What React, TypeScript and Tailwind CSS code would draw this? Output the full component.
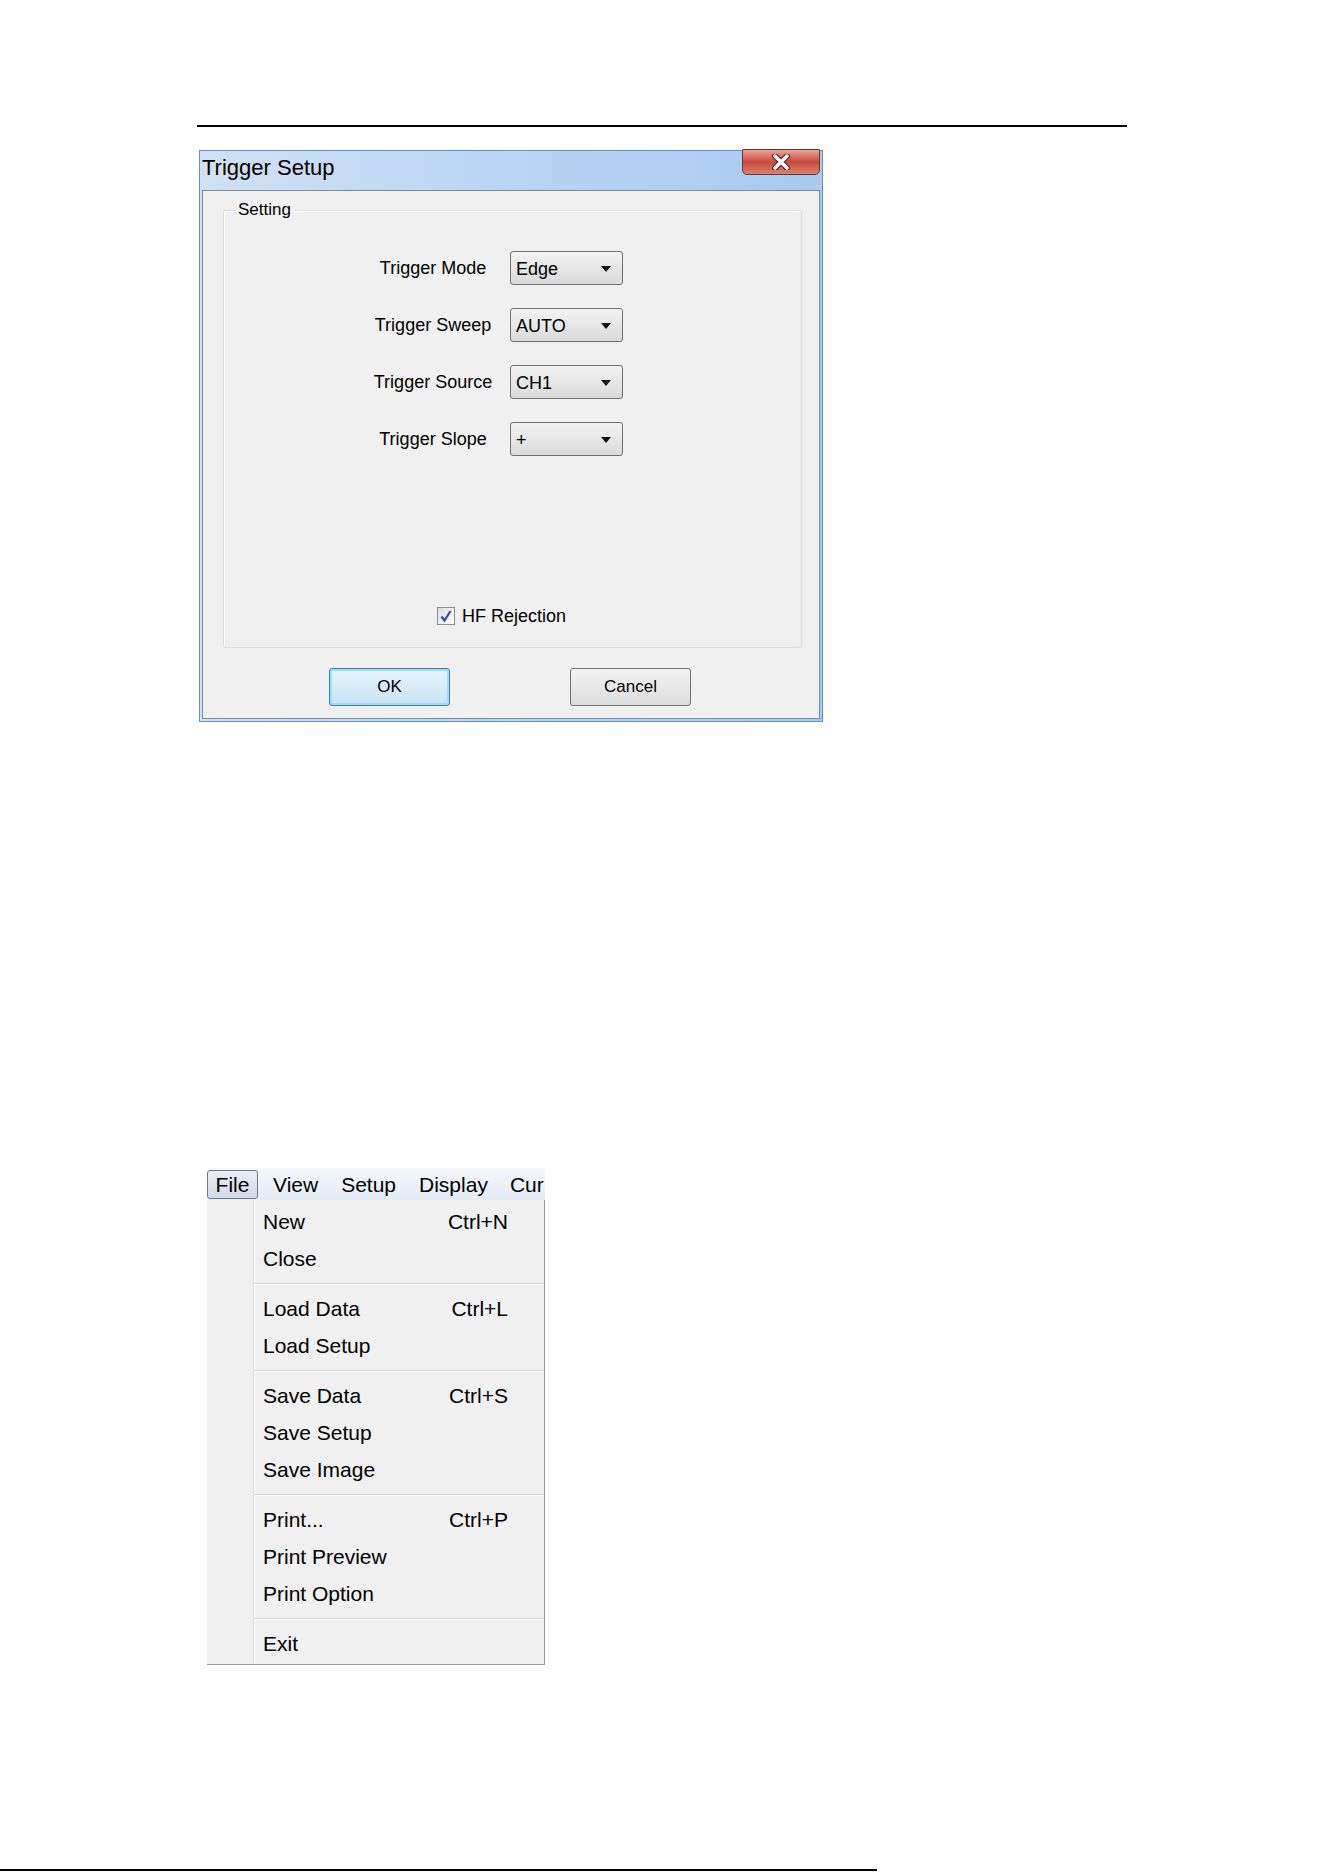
import React from "react";

const rows = [
  { label: "Trigger Mode", value: "Edge" },
  { label: "Trigger Sweep", value: "AUTO" },
  { label: "Trigger Source", value: "CH1" },
  { label: "Trigger Slope", value: "+" },
];

const menuGroups = [
  [
    { name: "New", key: "Ctrl+N" },
    { name: "Close", key: "" },
  ],
  [
    { name: "Load Data", key: "Ctrl+L" },
    { name: "Load Setup", key: "" },
  ],
  [
    { name: "Save Data", key: "Ctrl+S" },
    { name: "Save Setup", key: "" },
    { name: "Save Image", key: "" },
  ],
  [
    { name: "Print...", key: "Ctrl+P" },
    { name: "Print Preview", key: "" },
    { name: "Print Option", key: "" },
  ],
  [{ name: "Exit", key: "" }],
];

const Arrow = () => (
  <svg width="10" height="6" viewBox="0 0 10 6">
    <polygon points="0,0 10,0 5,6" fill="#111" />
  </svg>
);

const Combo: React.FC<{ value: string }> = ({ value }) => (
  <div className="flex h-[34px] w-[113px] items-center justify-between rounded-[3px] border border-[#707070] bg-gradient-to-b from-[#f3f3f3] to-[#dadada] pl-[5px] pr-[11px] pt-[2px] text-[18px] text-black">
    <span>{value}</span>
    <Arrow />
  </div>
);

const TriggerDialog: React.FC = () => (
  <div className="ml-[199px] mt-[23px] flex h-[572px] w-[624px] flex-col border border-[#5f8fcf] bg-gradient-to-r from-[#d2e1f2] via-[#b8d4f4] to-[#a8caf1]">
    <div className="flex h-[39px] items-start justify-between">
      <span className="pl-[2px] pt-[4px] text-[22px] leading-[26px] text-black">Trigger Setup</span>
      <div className="-mt-[2px] mr-[2px] flex h-[26px] w-[78px] items-center justify-center rounded-b-[5px] border border-[#6e3530] bg-gradient-to-b from-[#e7a597] via-[#c8473c] to-[#d88373]">
        <svg width="20" height="16" viewBox="0 0 20 16">
          <path d="M4 2 L16 14 M16 2 L4 14" stroke="#5a2a26" strokeWidth="6" strokeLinecap="round" />
          <path d="M4 2 L16 14 M16 2 L4 14" stroke="#ffffff" strokeWidth="3.5" strokeLinecap="round" />
        </svg>
      </div>
    </div>
    <div className="mb-[2px] ml-[2px] mr-[2px] flex flex-1 flex-col border border-[#7a8ba0] bg-[#f0f0f0]">
      <fieldset className="ml-[20px] mr-[17px] mt-[9px] h-[448px] rounded-[3px] border border-[#d5dfe5] shadow-[inset_1px_1px_0_#ffffff]">
        <legend className="ml-[11px] px-[3px] text-[17px] leading-[20px] text-black">Setting</legend>
        <div className="flex flex-col pl-[149px] pt-[31px]">
          <div className="flex flex-col gap-[23px]">
            {rows.map((r) => (
              <div key={r.label} className="flex items-center gap-[17px]">
                <span className="w-[120px] text-center text-[18px] text-black">{r.label}</span>
                <Combo value={r.value} />
              </div>
            ))}
          </div>
          <div className="ml-[64px] mt-[151px] flex h-[18px] items-center gap-[7px]">
            <div className="flex h-[18px] w-[18px] items-center justify-center border border-[#8e8f8f] bg-gradient-to-br from-[#d9dde6] to-[#ffffff]">
              <svg width="14" height="14" viewBox="0 0 14 14">
                <path d="M2.5 7.5 L5.5 11.5 L11.5 2" stroke="#3a4f8a" strokeWidth="2.2" fill="none" />
              </svg>
            </div>
            <span className="text-[18px] text-black">HF Rejection</span>
          </div>
        </div>
      </fieldset>
      <div className="ml-[126px] mt-[20px] flex gap-[120px]">
        <button className="flex h-[38px] w-[121px] items-center justify-center rounded-[3px] border border-[#3c7fb1] bg-gradient-to-b from-[#eaf5fc] to-[#c6e2f4] text-[17px] text-black shadow-[inset_0_0_0_2px_#9fdcf5]">
          OK
        </button>
        <button className="flex h-[38px] w-[121px] items-center justify-center rounded-[3px] border border-[#707070] bg-gradient-to-b from-[#f4f4f4] to-[#dcdcdc] text-[17px] text-black">
          Cancel
        </button>
      </div>
    </div>
  </div>
);

const FileMenu: React.FC = () => (
  <div className="ml-[207px] mt-[446px] flex w-[338px] flex-col text-[21px] text-black">
    <div className="flex h-[32px] items-start overflow-hidden whitespace-nowrap bg-gradient-to-b from-[#f5f8fc] to-[#e4ebf5]">
      <div className="mt-[2px] flex h-[29px] w-[51px] shrink-0 items-center justify-center rounded-[3px] border border-[#6f7986] bg-gradient-to-b from-[#e9eef5] to-[#d2d9e3]">
        File
      </div>
      <span className="ml-[15px] mt-[2px] leading-[29px]">View</span>
      <span className="ml-[23px] mt-[2px] leading-[29px]">Setup</span>
      <span className="ml-[23px] mt-[2px] leading-[29px]">Display</span>
      <span className="ml-[22px] mt-[2px] leading-[29px]">Cur</span>
    </div>
    <div className="flex border-b border-r border-[#979797] bg-[#f0f0f0]">
      <div className="w-[47px] border-r border-[#dcdcdc] shadow-[1px_0_0_#ffffff]" />
      <div className="flex flex-1 flex-col pb-[2px] pt-[3px]">
        {menuGroups.map((g, gi) => (
          <React.Fragment key={gi}>
            {gi > 0 && (
              <div className="h-[13px] pt-[6px]">
                <div className="h-px bg-[#d7d7d7]" />
                <div className="h-px bg-white" />
              </div>
            )}
            {g.map((it) => (
              <div key={it.name} className="flex h-[37px] items-center justify-between pl-[9px] pr-[36px]">
                <span>{it.name}</span>
                <span>{it.key}</span>
              </div>
            ))}
          </React.Fragment>
        ))}
      </div>
    </div>
  </div>
);

export default function App() {
  return (
    <div
      className="flex h-[1872px] w-[1324px] flex-col bg-white"
      style={{ fontFamily: '"Liberation Sans", Arial, sans-serif' }}
    >
      <div className="ml-[197px] mt-[125px] h-[2px] w-[930px] bg-black" />
      <TriggerDialog />
      <FileMenu />
      <div className="mb-[1px] mt-auto h-[2px] w-[877px] bg-black" />
    </div>
  );
}
